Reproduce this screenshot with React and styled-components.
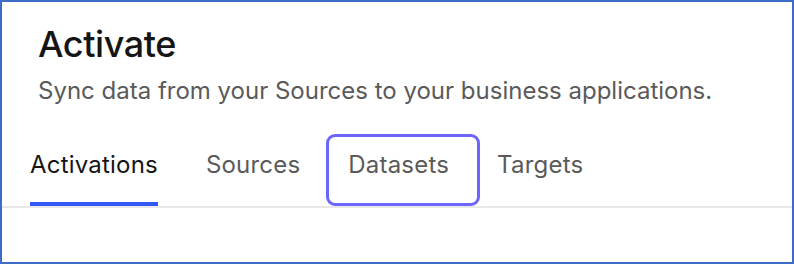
import styled, { createGlobalStyle } from "styled-components";

const GlobalStyle = createGlobalStyle`
  * { box-sizing: border-box; }
  body {
    margin: 0;
    background: #ffffff;
    font-family: Inter, "Noto Sans", sans-serif;
  }
`;

const Frame = styled.div`
  width: 794px;
  height: 264px;
  border: 2px solid #3d6cc6;
  background: #ffffff;
  display: flex;
  flex-direction: column;
`;

const Header = styled.header`
  padding: 20px 0 0 36px;
`;

const Title = styled.h1`
  margin: 0;
  font-size: 36px;
  line-height: 44px;
  font-weight: 500;
  color: #151515;
  letter-spacing: -0.4px;
`;

const Subtitle = styled.p`
  margin: 10px 0 0;
  font-size: 24px;
  line-height: 30px;
  font-weight: 400;
  color: #5a5a5a;
`;

const TabList = styled.nav`
  display: flex;
  gap: 48px;
  padding-left: 28px;
  margin-top: 44px;
  border-bottom: 2px solid #e8e8e8;
`;

const Tab = styled.button`
  position: relative;
  border: none;
  background: none;
  padding: 0 0 26px;
  margin: 0;
  font-family: inherit;
  font-size: 24px;
  line-height: 30px;
  font-weight: 400;
  letter-spacing: 0.2px;
  color: ${(p) => (p.$active ? "#151515" : "#5a5a5a")};
  cursor: pointer;

  &::after {
    content: "";
    position: absolute;
    left: 0;
    right: 0;
    bottom: 0;
    height: 4px;
    background: ${(p) => (p.$active ? "#3358f5" : "transparent")};
  }

  &::before {
    content: "";
    display: ${(p) => (p.$focused ? "block" : "none")};
    position: absolute;
    left: -22px;
    right: -31px;
    top: -16px;
    bottom: 0;
    border: 3px solid #6c66ff;
    border-radius: 9px;
  }
`;

const tabs = ["Activations", "Sources", "Datasets", "Targets"];

export default function App() {
  return (
    <>
      <GlobalStyle />
      <Frame>
        <Header>
          <Title>Activate</Title>
          <Subtitle>Sync data from your Sources to your business applications.</Subtitle>
        </Header>
        <TabList>
          {tabs.map((t) => (
            <Tab key={t} $active={t === "Activations"} $focused={t === "Datasets"}>
              {t}
            </Tab>
          ))}
        </TabList>
      </Frame>
    </>
  );
}
